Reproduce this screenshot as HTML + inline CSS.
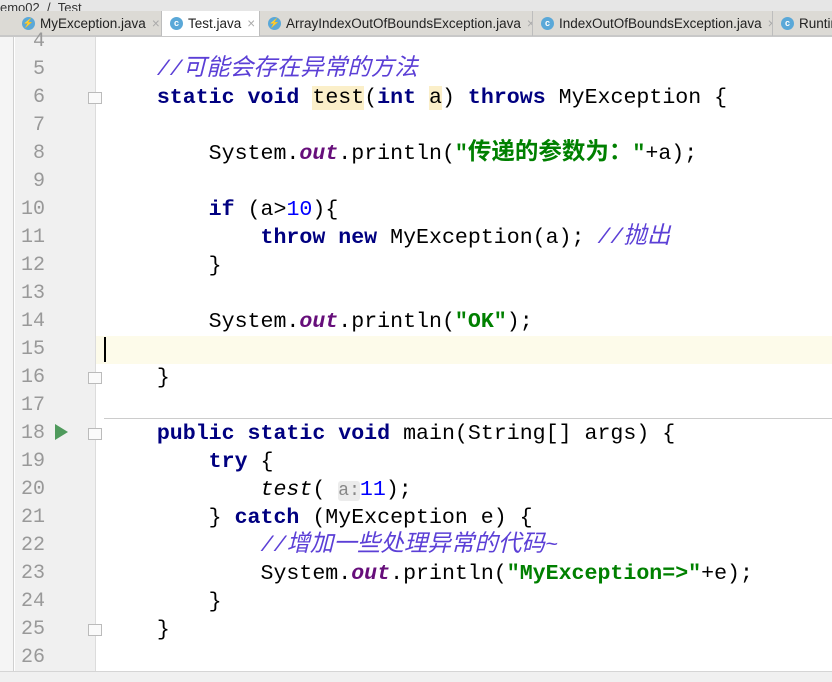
<!DOCTYPE html>
<html><head><meta charset="utf-8"><style>
*{margin:0;padding:0;box-sizing:border-box}
body{width:832px;height:682px;overflow:hidden;background:#fff;position:relative;font-family:"Liberation Sans","Noto Sans CJK SC",sans-serif}
.crumb{position:absolute;left:0;top:0;width:832px;height:11px;background:#e6e6e6;font-size:13px;color:#333;overflow:hidden}
.tabs{position:absolute;left:0;top:11px;width:832px;height:26px;background:#dcdad5;border-bottom:2px solid #c8c8c8}
.tab{position:absolute;top:0;height:25px;border-right:1px solid #bdbdbd;font-size:13.5px;color:#222;line-height:25px;padding-left:26px;white-space:nowrap;overflow:hidden}
.tab.act{background:#fff}
.ic{position:absolute;left:8px;top:6px;width:13px;height:13px;border-radius:50%;background:#5aa8d8;color:#fff;font-size:9px;line-height:13px;text-align:center;font-weight:bold}
.x{color:#aaa;margin-left:6px}
.side{position:absolute;left:0;top:37px;width:14px;height:645px;background:#f5f5f5;border-right:1px solid #d0d0d0}
.gut{position:absolute;left:15px;top:37px;width:81px;height:634px;background:#f0f0f0;border-right:1px solid #dcdcdc}
.ln{position:absolute;left:13px;width:32px;text-align:right;font-family:"Liberation Mono",monospace;font-size:20px;color:#999;height:28px;line-height:28px}
.code{position:absolute;left:105px;height:28px;line-height:28px;font-family:"Liberation Mono","Noto Sans CJK SC",monospace;font-size:21.6px;color:#000;white-space:pre}
.k{color:#000080;font-weight:bold}
.s{color:#008000;font-weight:bold}
.c{color:#5b3fd6;font-style:italic}
.o{color:#660e7a;font-style:italic;font-weight:bold}
.n{color:#0000ff}
.z{font-size:23.5px}
.hl{background:#fbefc9}
.hint{background:#ececec;color:#888;font-size:18px;border-radius:3px}
.fold{position:absolute;left:88px;width:14px;height:12px;border:1px solid #bbb;background:#fafafa}
.bot{position:absolute;left:0;top:671px;width:832px;height:11px;background:#f0f0f0;border-top:1px solid #d5d5d5}
</style></head><body>
<div class="crumb">emo02 &nbsp;/ &nbsp;Test</div>
<div class="tabs">
<div class="tab" style="left:14px;width:148px"><span class="ic">⚡</span>MyException.java<span class="x">×</span></div>
<div class="tab act" style="left:162px;width:98px"><span class="ic">c</span>Test.java<span class="x">×</span></div>
<div class="tab" style="left:260px;width:273px"><span class="ic">⚡</span>ArrayIndexOutOfBoundsException.java<span class="x">×</span></div>
<div class="tab" style="left:533px;width:240px"><span class="ic">c</span>IndexOutOfBoundsException.java<span class="x">×</span></div>
<div class="tab" style="left:773px;width:70px"><span class="ic">c</span>Runtime</div>
</div>
<div class="side"></div>
<div class="gut"></div>
<div style="position:absolute;left:96px;top:336px;width:736px;height:28px;background:#fdfbea"></div>
<div style="position:absolute;left:104px;top:337px;width:2px;height:25px;background:#000"></div>
<div style="position:absolute;left:104px;top:418px;width:728px;height:1px;background:#ccc"></div>
<div style="position:absolute;left:55px;top:424px;width:0;height:0;border-left:13px solid #4f9a5c;border-top:8px solid transparent;border-bottom:8px solid transparent"></div>
<div class="fold" style="top:92px"></div><div class="fold" style="top:372px"></div><div class="fold" style="top:428px"></div><div class="fold" style="top:624px"></div>

<div class="ln" style="top:28px">4</div><div class="ln" style="top:56px">5</div><div class="ln" style="top:84px">6</div><div class="ln" style="top:112px">7</div><div class="ln" style="top:140px">8</div><div class="ln" style="top:168px">9</div><div class="ln" style="top:196px">10</div><div class="ln" style="top:224px">11</div><div class="ln" style="top:252px">12</div><div class="ln" style="top:280px">13</div><div class="ln" style="top:308px">14</div><div class="ln" style="top:336px">15</div><div class="ln" style="top:364px">16</div><div class="ln" style="top:392px">17</div><div class="ln" style="top:420px">18</div><div class="ln" style="top:448px">19</div><div class="ln" style="top:476px">20</div><div class="ln" style="top:504px">21</div><div class="ln" style="top:532px">22</div><div class="ln" style="top:560px">23</div><div class="ln" style="top:588px">24</div><div class="ln" style="top:616px">25</div><div class="ln" style="top:644px">26</div>

<div class="code" style="top:56px">    <span class="c">//<span class="z">可能会存在异常的方法</span></span></div>
<div class="code" style="top:84px">    <span class="k">static void</span> <span class="hl">test</span>(<span class="k">int</span> <span class="hl">a</span>) <span class="k">throws</span> MyException {</div>
<div class="code" style="top:140px">        System.<span class="o">out</span>.println(<span class="s">"<span class="z">传递的参数为：</span>"</span>+a);</div>
<div class="code" style="top:196px">        <span class="k">if</span> (a&gt;<span class="n">10</span>){</div>
<div class="code" style="top:224px">            <span class="k">throw new</span> MyException(a); <span class="c">//<span class="z">抛出</span></span></div>
<div class="code" style="top:252px">        }</div>
<div class="code" style="top:308px">        System.<span class="o">out</span>.println(<span class="s">"OK"</span>);</div>
<div class="code" style="top:364px">    }</div>
<div class="code" style="top:420px">    <span class="k">public static void</span> main(String[] args) {</div>
<div class="code" style="top:448px">        <span class="k">try</span> {</div>
<div class="code" style="top:476px">            <i>test</i>( <span class="hint">a:</span><span class="n">11</span>);</div>
<div class="code" style="top:504px">        } <span class="k">catch</span> (MyException e) {</div>
<div class="code" style="top:532px">            <span class="c">//<span class="z">增加一些处理异常的代码</span>~</span></div>
<div class="code" style="top:560px">            System.<span class="o">out</span>.println(<span class="s">"MyException=&gt;"</span>+e);</div>
<div class="code" style="top:588px">        }</div>
<div class="code" style="top:616px">    }</div>
<div class="bot"></div>
</body></html>
